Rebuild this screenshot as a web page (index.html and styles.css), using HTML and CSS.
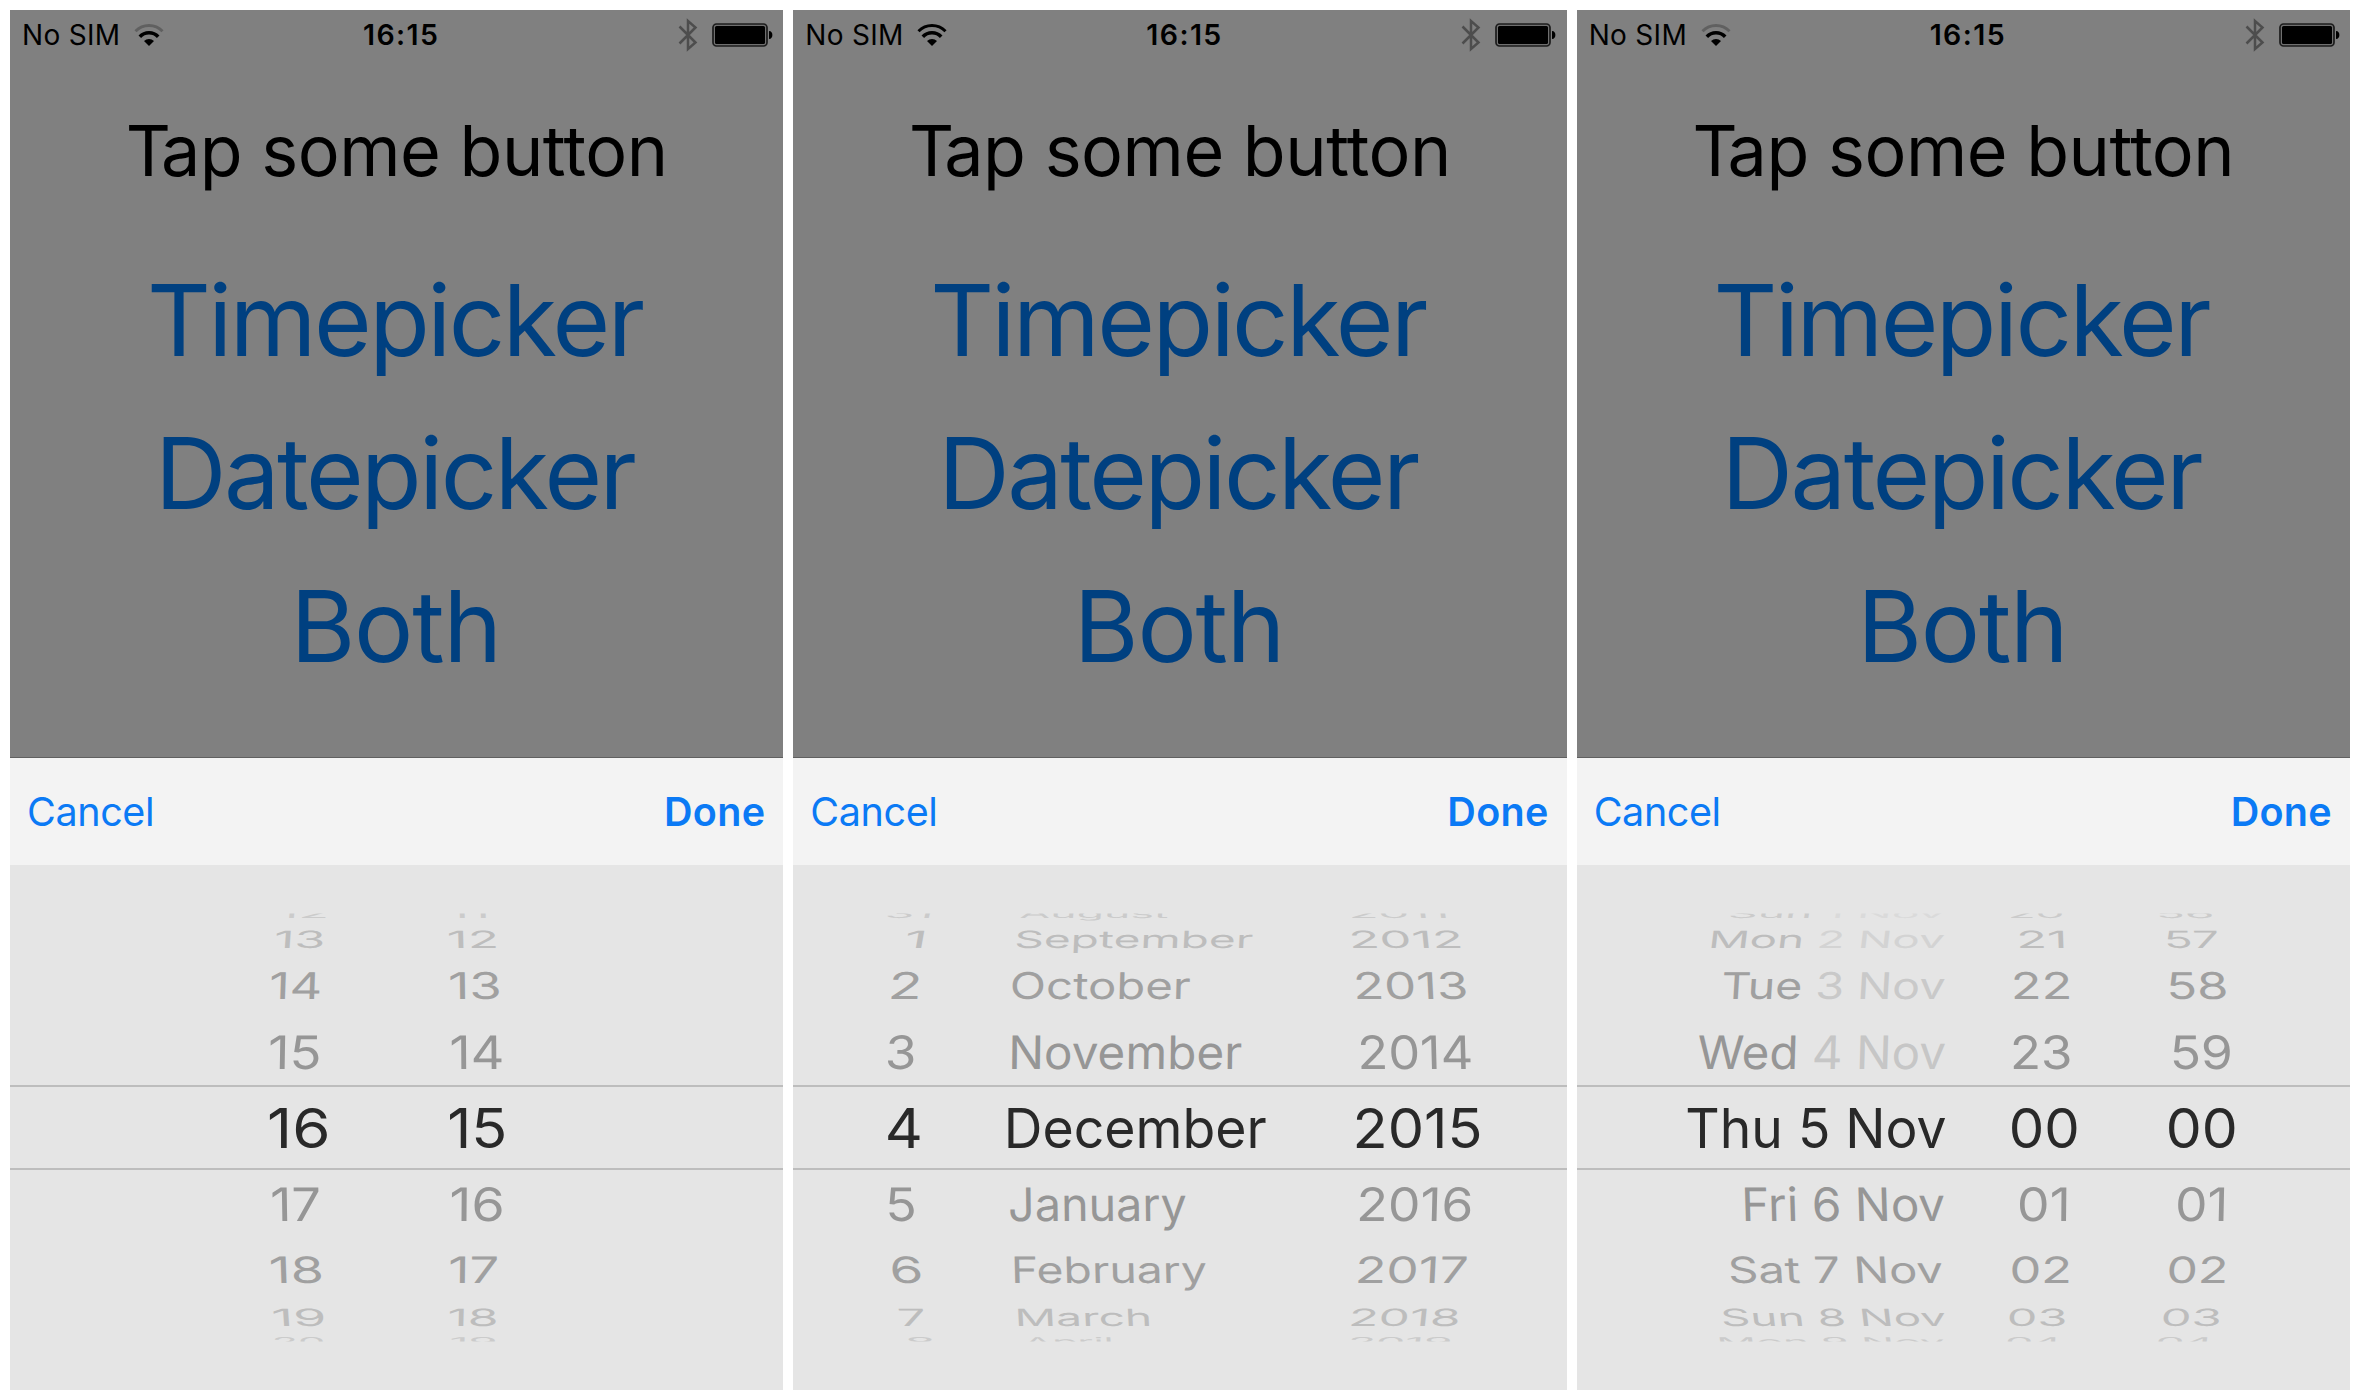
FILE: index.html
```html
<!DOCTYPE html>
<html lang="en">
<head>
<meta charset="utf-8">
<title>Pickers</title>
<link rel="stylesheet" href="styles.css">
</head>
<body>
<svg class="sprite" width="0" height="0" aria-hidden="true">
  <symbol id="bluetooth" viewBox="0 0 20 34">
    <path d="M1.5 8.5 L17.5 24.5 L10 31 V3 L17.5 9.500 L1.500 25.500" fill="none" stroke="#4d4d4d" stroke-width="2.500"/>
  </symbol>
  <symbol id="battery" viewBox="0 0 62 24">
    <rect x="1" y="1" width="54" height="22" rx="3.500" fill="#6f6f6f" stroke="#1c1c1c" stroke-width="1.700"/>
    <rect x="3" y="3" width="50" height="18" rx="1.500" fill="#000"/>
    <path d="M57 8 C61.500 8 61.500 16 57 16 Z" fill="#000"/>
  </symbol>
  <symbol id="wifi" viewBox="0 0 30 22">
    <path class="wifi-outer" d="M1.500 7.200 A19 19 0 0 1 28.500 7.200" fill="none" stroke-width="3"/>
    <path d="M5.800 12.700 A12.500 12.500 0 0 1 24.200 12.700" fill="none" stroke="#000" stroke-width="3.500"/>
    <path d="M10 17 A7.500 7.500 0 0 1 20 17 L15 22 Z" fill="#000" stroke="none"/>
  </symbol>
</svg>

<main class="screens">
  <section class="phone">
    <div class="page">
      <header class="status">
        <span class="carrier">No SIM</span>
        <svg class="wifi wifi-weak"><use href="#wifi"/></svg>
        <span class="clock">16:15</span>
        <svg class="bluetooth"><use href="#bluetooth"/></svg>
        <svg class="battery"><use href="#battery"/></svg>
      </header>
      <h1 class="title">Tap some button</h1>
      <nav class="choices"><a class="choice">Timepicker</a><a class="choice">Datepicker</a><a class="choice choice-both">Both</a></nav>
    </div>
    <div class="toolbar"><span class="cancel">Cancel</span><span class="done">Done</span></div>
    <div class="wheel wheel-time" data-wheel="time"></div>
  </section>

  <section class="phone">
    <div class="page">
      <header class="status">
        <span class="carrier">No SIM</span>
        <svg class="wifi"><use href="#wifi"/></svg>
        <span class="clock">16:15</span>
        <svg class="bluetooth"><use href="#bluetooth"/></svg>
        <svg class="battery"><use href="#battery"/></svg>
      </header>
      <h1 class="title">Tap some button</h1>
      <nav class="choices"><a class="choice">Timepicker</a><a class="choice">Datepicker</a><a class="choice choice-both">Both</a></nav>
    </div>
    <div class="toolbar"><span class="cancel">Cancel</span><span class="done">Done</span></div>
    <div class="wheel wheel-date" data-wheel="date"></div>
  </section>

  <section class="phone">
    <div class="page">
      <header class="status">
        <span class="carrier">No SIM</span>
        <svg class="wifi wifi-weak"><use href="#wifi"/></svg>
        <span class="clock">16:15</span>
        <svg class="bluetooth"><use href="#bluetooth"/></svg>
        <svg class="battery"><use href="#battery"/></svg>
      </header>
      <h1 class="title">Tap some button</h1>
      <nav class="choices"><a class="choice">Timepicker</a><a class="choice">Datepicker</a><a class="choice choice-both">Both</a></nav>
    </div>
    <div class="toolbar"><span class="cancel">Cancel</span><span class="done">Done</span></div>
    <div class="wheel wheel-both" data-wheel="both"></div>
  </section>
</main>
<script src="wheels.js"></script>
</body>
</html>
```

FILE: styles.css
```css
* { box-sizing: border-box; }

body {
  margin: 0;
  overflow: hidden;
  background: #fff;
  font-family: Inter, "Liberation Sans", sans-serif;
}

.sprite { display: block; height: 0; }

.screens {
  display: grid;
  grid-template-columns: repeat(3, 1fr);
  gap: 10px;
  width: 2360px;
  height: 1400px;
  padding: 10px;
}

.phone {
  display: flex;
  flex-direction: column;
  min-width: 0;
  overflow: hidden;
}

.page {
  height: 748px;
  background: #808080;
  border-bottom: 1px solid #606060;
}

.status {
  display: flex;
  align-items: center;
  height: 50px;
  padding-left: 12px;
  font-size: 28px;
  line-height: 50px;
}

.carrier { width: 112px; letter-spacing: 0.3px; white-space: nowrap; }

.wifi { width: 30px; height: 22px; stroke: #000; }
.wifi-weak { stroke: #606060; }

.clock {
  width: 78px;
  margin-left: 199px;
  font-size: 28.5px;
  font-weight: 600;
  letter-spacing: 1.4px;
  white-space: nowrap;
}

.bluetooth { width: 20px; height: 34px; margin-left: 237px; }
.battery { width: 62px; height: 24px; margin-left: 14px; }

.title {
  margin: 41px 0 0;
  font-size: 70px;
  font-weight: 400;
  line-height: 100px;
  letter-spacing: -0.5px;
  text-align: center;
  white-space: nowrap;
}

.title::first-letter { letter-spacing: -10px; }

.choices {
  display: flex;
  flex-direction: column;
  align-items: center;
  margin-top: 43px;
  padding-right: 4px;
  color: #004080;
}

.choice {
  font-size: 99px;
  line-height: 153px;
  letter-spacing: -2.5px;
  white-space: nowrap;
}

.choice-both { padding-left: 2px; letter-spacing: -1.2px; }

.toolbar {
  display: flex;
  justify-content: space-between;
  align-items: center;
  height: 107px;
  padding: 0 18px 0 17px;
  background: #f3f3f3;
  color: #0b7af5;
  font-size: 39.5px;
}

.cancel { letter-spacing: -0.4px; }
.done { font-weight: 600; letter-spacing: 0.3px; }

.wheel {
  flex: 1;
  padding-top: 37px;
  background: #e5e5e5;
}

.row {
  display: grid;
  grid-template-rows: 100%;
  align-items: center;
  height: 22px;
}

.wheel-time .row { grid-template-columns: 250px 180px 1fr; }
.wheel-date .row { grid-template-columns: 90px 120px 340px 1fr; }
.wheel-both .row { grid-template-columns: 100px 320px 160px 1fr; }

/* Fills the empty first column. */
.row::before { content: ""; }

.label {
  height: 60px;
  font-size: 55px;
  line-height: 60px;
  white-space: pre;
  transform-origin: 0 50%;
}

.row-0, .row-8 { color: #cbcbcb; }
.row-0 { height: 24px; clip-path: inset(11.500px 0 0 0); }
.row-8 { clip-path: inset(0 0 11.500px 0); }
.row-1, .row-7 { color: #bdbdbd; }
.row-1 { height: 26.500px; }
.row-7 { height: 29px; }
.row-2, .row-6 { color: #a0a0a0; }
.row-2 { height: 66px; }
.row-6 { height: 64px; }
.row-3, .row-5 { color: #969696; }
.row-3 { height: 66.500px; }
.row-5 { height: 68px; }
.row-4 {
  height: 85px;
  padding-top: 1px;
  border-top: 2px solid #bdbdbd;
  border-bottom: 2px solid #bdbdbd;
  color: #292929;
}

.row-3 .past { color: #c6c6c6; }
.row-2 .past { color: #c9c9c9; }
.row-1 .past { color: #d3d3d3; }
.row-0 .past { color: #dadada; }
```

FILE: wheels.js
```js
// Each entry: text, left edge and right edge of the label on the screen,
// then any trailing part that names a day already past.
// Rows run from the top of the drum to the bottom; row 4 is the selection.
const wheels = {
  time: {
    columns: [250, 430],
    lean: [-0.4, 0.15],
    rows: [
      [["12", 270, 316], ["11", 440, 476]],
      [["13", 266, 312.7], ["12", 438.7, 485.7]],
      [["14", 261, 310], ["13", 440, 489]],
      [["15", 260, 309.3], ["14", 441.3, 492]],
      [["16", 259.3, 317], ["15", 439.3, 494.7]],
      [["17", 262, 309], ["16", 441.3, 491.7]],
      [["18", 260.7, 311], ["17", 440, 487]],
      [["19", 263.3, 313.3], ["18", 439.3, 486]],
      [["20", 265, 313.3], ["19", 441, 485]]
    ]
  },
  date: {
    columns: [90, 210, 550],
    lean: [-1, -0.3, 0.6],
    rows: [
      [["31", 94.9, 137.3], ["August", 227.5, 374.8], ["2011", 558.7, 652.5]],
      [["1", 113.7, 130.2], ["September", 223.9, 459.6], ["2012", 559.2, 666.8]],
      [["2", 99.4, 125.7], ["October", 219.5, 397.1], ["2013", 563.7, 672.6]],
      [["3", 94.9, 120.8], ["November", 218.6, 448.5], ["2014", 568.1, 677.9]],
      [["4", 94.9, 127.1], ["December", 214.6, 473], ["2015", 563.7, 686.9]],
      [["5", 95.8, 121.3], ["January", 216.8, 393.1], ["2016", 567.2, 677.5]],
      [["6", 99.4, 127.1], ["February", 221.3, 413.2], ["2017", 565.9, 673.5]],
      [["7", 106.5, 131.5], ["March", 224.8, 356.1], ["2018", 559.2, 665]],
      [["8", 114.6, 140.5], ["April", 231.5, 318.1], ["2019", 558.3, 657]]
    ]
  },
  both: {
    columns: [100, 420, 580],
    lean: [-0.7, 0.2, 0.5],
    rows: [
      [["Sun ", 153.9, 367, "1 Nov"], ["20", 433.9, 485.2], ["56", 582.1, 634.7]],
      [["Mon ", 134.8, 367, "2 Nov"], ["21", 442.8, 486.5], ["57", 590.1, 640.5]],
      [["Tue ", 145.9, 367.8, "3 Nov"], ["22", 437.4, 491.9], ["58", 592.8, 648.6]],
      [["Wed ", 121.3, 368.2, "4 Nov"], ["23", 436.5, 492.8], ["59", 596.3, 653]],
      [["Thu 5 Nov", 110.2, 368.7], ["00", 434.7, 499.9], ["00", 591.9, 658]],
      [["Fri 6 Nov", 167.8, 367.3], ["01", 442.8, 489.6], ["01", 600.8, 647.2]],
      [["Sat 7 Nov", 153.5, 365.1], ["02", 435.2, 491.9], ["02", 592.3, 648.1]],
      [["Sun 8 Nov", 146.3, 368.2], ["03", 432.5, 487.8], ["03", 586.5, 642.3]],
      [["Mon 9 Nov", 142.8, 367], ["04", 430.7, 483], ["04", 581.2, 634.7]]
    ]
  }
};

const flatten = [0.22, 0.435, 0.67, 0.84, 1, 0.84, 0.66, 0.435, 0.22];
const slant = [-14, -10, -5, -2.5, 0, 2.5, 5, 10, 14];

const pen = document.createElement("canvas").getContext("2d");
pen.font = "55px Inter";

function makeLabel([text, left, right, past], origin, lean, index) {
  const label = document.createElement("span");
  label.className = "label";
  label.textContent = text;
  if (past) {
    const rest = document.createElement("span");
    rest.className = "past";
    rest.textContent = past;
    label.append(rest);
  }
  const ink = pen.measureText(text + (past || ""));
  const stretch = (right - left) / (ink.actualBoundingBoxLeft + ink.actualBoundingBoxRight);
  const shift = left - origin + ink.actualBoundingBoxLeft * stretch;
  label.style.transform =
    `translateX(${shift}px) skewX(${slant[index] * -lean}deg) scale(${stretch}, ${flatten[index]})`;
  return label;
}

document.querySelectorAll(".wheel").forEach((wheel) => {
  const { columns, lean, rows } = wheels[wheel.dataset.wheel];
  rows.forEach((cells, index) => {
    const row = document.createElement("div");
    row.className = `row row-${index}`;
    cells.forEach((cell, i) => row.append(makeLabel(cell, columns[i], lean[i], index)));
    wheel.append(row);
  });
});
```
